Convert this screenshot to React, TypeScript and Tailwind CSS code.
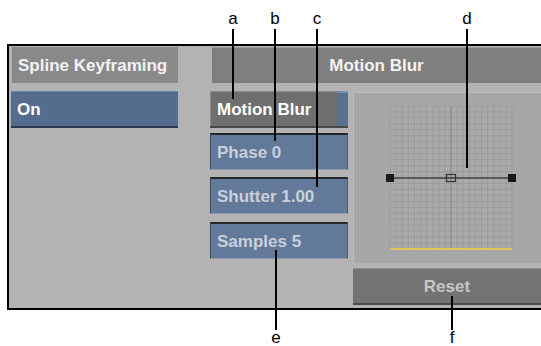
import React from "react";

const ui = "font-['Liberation_Sans',Arial,sans-serif] font-bold text-[17px] leading-none";

function Grid() {
  const x0 = 36;
  const x1 = 158;
  const y0 = 13;
  const y1 = 156;
  const cols = 20;
  const rows = 24;
  const v = Array.from({ length: cols + 1 }, (_, i) => x0 + ((x1 - x0) * i) / cols);
  const h = Array.from({ length: rows + 1 }, (_, i) => y0 + ((y1 - y0) * i) / rows);
  const cy = 85;
  const cx = 97;
  return (
    <svg width="188" height="171" className="block">
      <rect x={x0} y={y0} width={x1 - x0} height={y1 - y0} fill="#a9a9a9" />
      {v.map((x, i) => (
        <line key={"v" + i} x1={x} y1={y0} x2={x} y2={y1} stroke="#9c9c9c" strokeWidth="1" />
      ))}
      {h.map((y, i) => (
        <line key={"h" + i} x1={x0} y1={y} x2={x1} y2={y} stroke="#9c9c9c" strokeWidth="1" />
      ))}
      <line x1={cx} y1={y0} x2={cx} y2={y1} stroke="#868686" strokeWidth="1" />
      <line x1={x0} y1={y1} x2={x1} y2={y1} stroke="#f2d548" strokeWidth="1.5" />
      <line x1={x0} y1={cy} x2={x1} y2={cy} stroke="#404040" strokeWidth="1.5" />
      <rect x={x0 - 4} y={cy - 4} width="8" height="8" fill="#1a1a1a" />
      <rect x={x1 - 4} y={cy - 4} width="8" height="8" fill="#1a1a1a" />
      <rect x={cx - 4.5} y={cy - 3.5} width="9" height="7" fill="none" stroke="#333" strokeWidth="1.2" />
    </svg>
  );
}

function ValueButton({ label }: { label: string }) {
  return (
    <div
      className={`h-[37px] w-[138px] bg-[#62799a] border-t-2 border-t-[#262626] border-l border-l-[#3e4c60] border-r border-r-[#4a5870] border-b border-b-[#8e9cb0] flex items-center pl-[6px] text-[#c9d0da] ${ui}`}
    >
      {label}
    </div>
  );
}

function Callout({ letter, x, top, lineTop, lineBottom }: { letter: string; x: number; top: number; lineTop: number; lineBottom: number }) {
  return (
    <>
      <div
        className="absolute w-[2px] bg-black"
        style={{ left: x - 1, top: lineTop, height: lineBottom - lineTop }}
      />
      <div
        className="absolute w-[20px] text-center text-black font-['Liberation_Sans',Arial,sans-serif] text-[17px] leading-none"
        style={{ left: x - 10, top }}
      >
        {letter}
      </div>
    </>
  );
}

export default function App() {
  return (
    <div className="relative w-[541px] h-[346px] bg-white overflow-hidden">
      <div className="h-[44px]" />
      <div className="ml-[7px] h-[266px] border-l-2 border-y-2 border-black bg-[#b3b3b3] flex">
        {/* left column */}
        <div className="w-[170px] pl-[3px] pt-[1px] flex flex-col">
          <div className={`h-[36px] w-[166px] bg-[#898989] flex items-center pl-[6px] text-[#f2f2f2] ${ui}`}>
            Spline Keyframing
          </div>
          <div
            className={`mt-[8px] -ml-px h-[37px] w-[167px] bg-[#566c8d] border-t border-t-[#7088aa] border-b-2 border-b-[#2c3a52] flex items-center pl-[6px] text-white ${ui}`}
          >
            On
          </div>
        </div>

        {/* right area */}
        <div className="ml-[31px] w-[331px] flex flex-col">
          <div className="pt-[1px] pl-[2px]">
            <div className={`h-[36px] bg-[#7f7f7f] border-t border-t-[#9a9a9a] flex items-center justify-center text-[#f2f2f2] ${ui}`}>
              Motion Blur
            </div>
          </div>
          <div className="mt-[8px] flex">
            <div className="w-[138px] flex flex-col">
              <div className="h-[37px] flex border-b-2 border-b-[#474747]">
                <div
                  className={`flex-1 bg-[#6f6f6f] border-t border-t-[#8c8c8c] border-l border-l-[#8a8a8a] flex items-center pl-[6px] text-white ${ui}`}
                >
                  Motion Blur
                </div>
                <div className="w-[11px] bg-[#5a7090] border-t-2 border-t-[#7a90b0]" />
              </div>
              <div className="mt-[5px]">
                <ValueButton label="Phase 0" />
              </div>
              <div className="mt-[7px]">
                <ValueButton label="Shutter 1.00" />
              </div>
              <div className="mt-[8px]">
                <ValueButton label="Samples 5" />
              </div>
            </div>
            <div className="ml-[5px] w-[188px] flex flex-col">
              <div className="mt-[1px] h-[171px] bg-[#a7a7a7] border-t border-l border-[#bdbdbd]">
                <Grid />
              </div>
              <div
                className={`mt-[5px] h-[37px] bg-[#737373] border-t border-t-[#8e8e8e] border-b-2 border-b-[#4a4a4a] flex items-center justify-center text-[#c6c6c6] ${ui}`}
              >
                Reset
              </div>
            </div>
          </div>
        </div>
      </div>

      <Callout letter="a" x={233} top={10} lineTop={29} lineBottom={99} />
      <Callout letter="b" x={275} top={10} lineTop={29} lineBottom={141} />
      <Callout letter="c" x={317} top={10} lineTop={29} lineBottom={187} />
      <Callout letter="d" x={467} top={10} lineTop={29} lineBottom={168} />
      <Callout letter="e" x={276} top={329} lineTop={250} lineBottom={330} />
      <Callout letter="f" x={452} top={329} lineTop={296} lineBottom={330} />
    </div>
  );
}
